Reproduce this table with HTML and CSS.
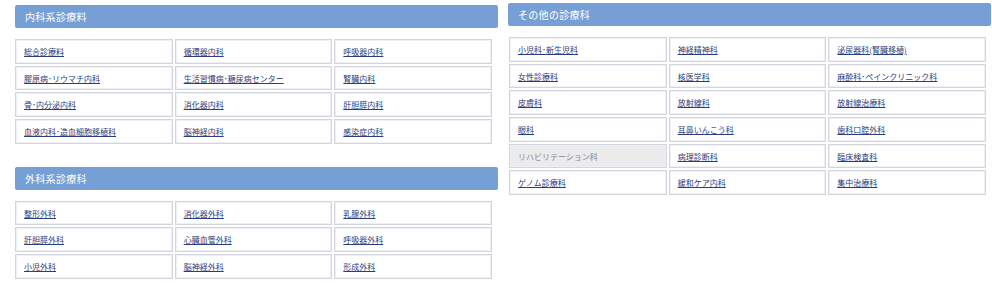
FILE: index.html
```html
<!DOCTYPE html>
<html lang="ja">
<head>
  <meta charset="UTF-8">
  <meta name="viewport" content="width=device-width, initial-scale=1.0">
  <title>診療科一覧</title>
  <link rel="stylesheet" href="styles.css">
</head>
<body>
  <div class="depts">
    <div class="col left">
      <!-- 内科系 -->
      <section class="dept">
        <h2 class="dept-title">内科系診療料</h2>
        <ul class="dept-list">
          <li><a href="#">総合診療料</a></li>
          <li><a href="#">循環器内科</a></li>
          <li><a href="#">呼吸器内科</a></li>
          <li><a href="#">膠原病･リウマチ内科</a></li>
          <li><a href="#">生活習慣病･糖尿病センター</a></li>
          <li><a href="#">腎臓内科</a></li>
          <li><a href="#">骨･内分泌内科</a></li>
          <li><a href="#">消化器内科</a></li>
          <li><a href="#">肝胆膵内科</a></li>
          <li><a href="#">血液内科･造血細胞移植科</a></li>
          <li><a href="#">脳神経内科</a></li>
          <li><a href="#">感染症内科</a></li>
        </ul>
      </section>
      <!-- 外科系 -->
      <section class="dept">
        <h2 class="dept-title">外科系診療科</h2>
        <ul class="dept-list">
          <li><a href="#">整形外科</a></li>
          <li><a href="#">消化器外科</a></li>
          <li><a href="#">乳腺外科</a></li>
          <li><a href="#">肝胆膵外科</a></li>
          <li><a href="#">心臓血管外科</a></li>
          <li><a href="#">呼吸器外科</a></li>
          <li><a href="#">小児外科</a></li>
          <li><a href="#">脳神経外科</a></li>
          <li><a href="#">形成外科</a></li>
        </ul>
      </section>
    </div>

    <div class="col right">
      <!-- その他 -->
      <section class="dept">
        <h2 class="dept-title">その他の診療科</h2>
        <ul class="dept-list">
          <li><a href="#">小児科･新生児科</a></li>
          <li><a href="#">神経精神科</a></li>
          <li><a href="#">泌尿器科(腎臓移植)</a></li>
          <li><a href="#">女性診療科</a></li>
          <li><a href="#">核医学科</a></li>
          <li><a href="#">麻酔科･ペインクリニック科</a></li>
          <li><a href="#">皮膚科</a></li>
          <li><a href="#">放射線科</a></li>
          <li><a href="#">放射線治療科</a></li>
          <li><a href="#">眼科</a></li>
          <li><a href="#">耳鼻いんこう科</a></li>
          <li><a href="#">歯科口腔外科</a></li>
          <li class="off"><span>リハビリテーション科</span></li>
          <li><a href="#">病理診断科</a></li>
          <li><a href="#">臨床検査科</a></li>
          <li><a href="#">ゲノム診療科</a></li>
          <li><a href="#">緩和ケア内科</a></li>
          <li><a href="#">集中治療科</a></li>
        </ul>
      </section>
    </div>
  </div>
</body>
</html>
```

FILE: styles.css
```css
html, body {
  margin: 0;
  padding: 0;
  background: #fff;
}

body {
  font-family: "Noto Sans CJK JP", "Noto Sans", sans-serif;
}

.depts {
  display: flex;
  gap: 10px;
  padding: 0 1px 0 15px;
}

.col {
  flex: 1;
  min-width: 0;
}

.col.left {
  padding-top: 5px;
}

.col.right {
  padding-top: 3px;
}

.dept + .dept {
  margin-top: 23px;
}

/* 見出しバー */
.dept-title {
  margin: 0;
  height: 23px;
  line-height: 23px;
  padding-left: 10px;
  background: #76a0d5;
  border-radius: 2px;
  color: #fff;
  font-size: 10px;
  font-weight: normal;
  letter-spacing: 0.3px;
}

/* 診療科のマス */
.dept-list {
  list-style: none;
  margin: 11px 0 0;
  padding: 0;
  width: calc(100% - 6px);
  display: grid;
  grid-template-columns: repeat(3, 1fr);
  grid-auto-rows: 24.7px;
  gap: 2px 2px;
}

.col.right .dept-list {
  width: calc(100% - 6px);
  margin-left: 1px;
}

.dept-list li {
  display: flex;
  align-items: center;
  padding-left: 8px;
  border: 1px solid #d2d5de;
  box-shadow: inset 0 0 0 1px #eef0f4;
  font-size: 8px;
  white-space: nowrap;
}

.dept-list a {
  color: #2b3d7c;
  text-decoration: underline;
}

.dept-list li.off {
  background: #ebebeb;
  color: #8a8a8a;
}
```
